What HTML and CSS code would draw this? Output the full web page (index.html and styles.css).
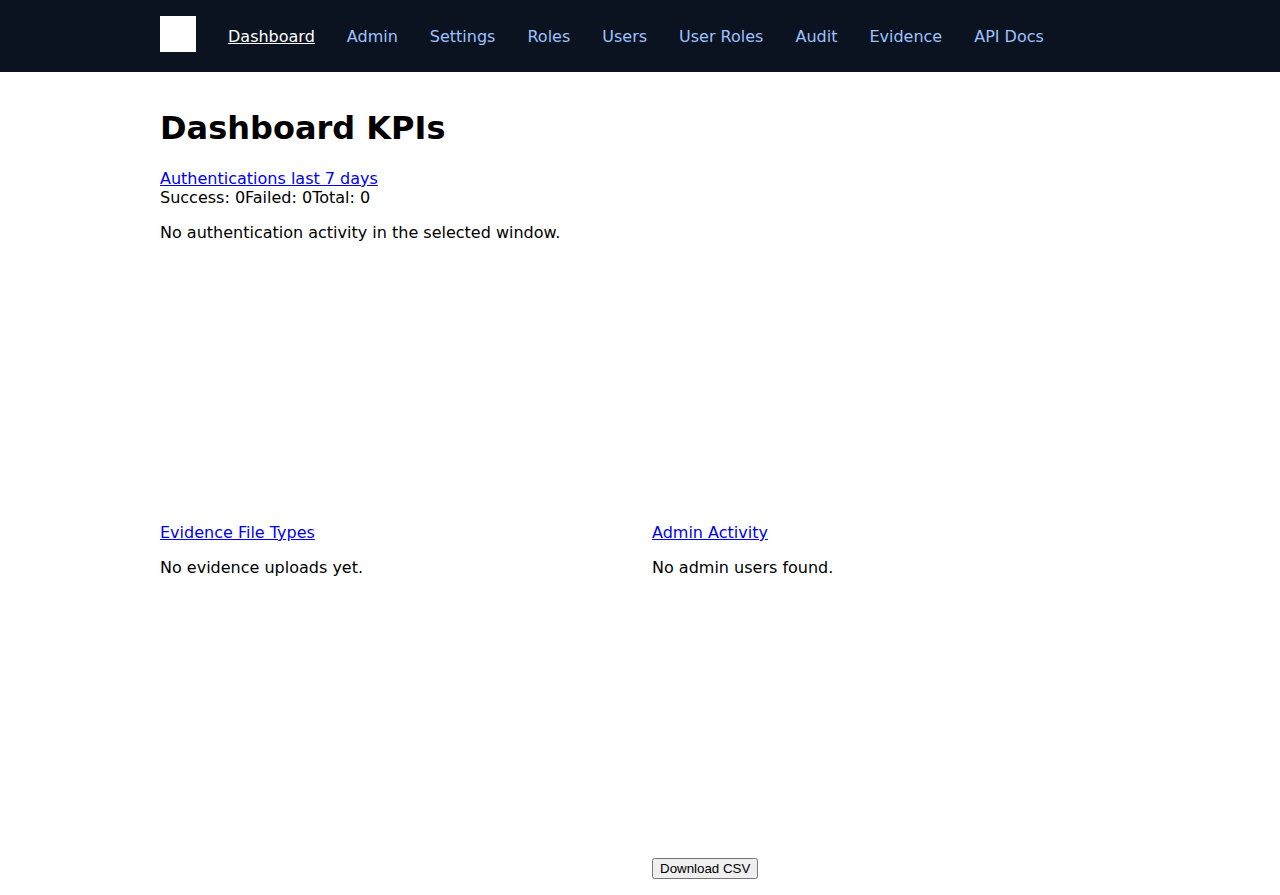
FILE: index.html
```html
<!DOCTYPE html>
<html lang="en">
<head>
<meta charset="utf-8">
<title>Dashboard</title>
<link rel="stylesheet" href="styles.css">
</head>
<body>
<header class="site-header">
  <nav class="nav">
    <span class="logo"></span>
    <a class="nav-link active" href="#dashboard">Dashboard</a>
    <a class="nav-link" href="#admin">Admin</a>
    <a class="nav-link" href="#settings">Settings</a>
    <a class="nav-link" href="#roles">Roles</a>
    <a class="nav-link" href="#users">Users</a>
    <a class="nav-link" href="#user-roles">User Roles</a>
    <a class="nav-link" href="#audit">Audit</a>
    <a class="nav-link" href="#evidence">Evidence</a>
    <a class="nav-link" href="#docs">API Docs</a>
  </nav>
</header>
<main class="content">
  <h1 class="title">Dashboard KPIs</h1>
  <section class="auth">
    <a class="card-link" href="#audit">Authentications last 7 days</a>
    <div class="totals"><span>Success: 0</span><span>Failed: 0</span><span>Total: 0</span></div>
    <div class="chart"><p>No authentication activity in the selected window.</p></div>
  </section>
  <div class="columns">
    <section>
      <a class="card-link" href="#evidence">Evidence File Types</a>
      <div class="panel"><p>No evidence uploads yet.</p></div>
    </section>
    <section>
      <a class="card-link" href="#users">Admin Activity</a>
      <div class="panel"><p>No admin users found.</p></div>
      <button class="download" type="button">Download CSV</button>
    </section>
  </div>
</main>
</body>
</html>
```
FILE: styles.css
```css
body {
  margin: 0;
  background: #fff;
  color: #000;
  font: 16px/19px "DejaVu Sans", sans-serif;
}
.site-header {
  height: 72px;
  background: #0b1320;
}
.nav {
  display: flex;
  align-items: center;
  gap: 32px;
  width: 960px;
  height: 72px;
  margin: 0 auto;
}
.logo {
  width: 36px;
  height: 36px;
  margin-bottom: 4px;
  background: #fff;
}
.nav-link {
  color: #9ec1ff;
  text-decoration: none;
}
.nav-link.active {
  color: #fff;
  text-decoration: underline;
}
.content {
  width: 960px;
  margin: 0 auto;
}
.title {
  margin: 0;
  padding: 37px 0 22px;
  font-size: 32px;
  line-height: 38px;
}
.card-link {
  display: inline-block;
  color: #0000ee;
}
.totals {
  display: flex;
}
.chart {
  display: flow-root;
  height: 316px;
}
.panel {
  display: flow-root;
  height: 316px;
}
.chart p,
.panel p {
  margin: 16px 0;
}
.columns {
  display: grid;
  grid-template-columns: 1fr 1fr;
  gap: 24px;
}
.download {
  display: block;
  font-family: "Liberation Sans", Arial, sans-serif;
}
```
